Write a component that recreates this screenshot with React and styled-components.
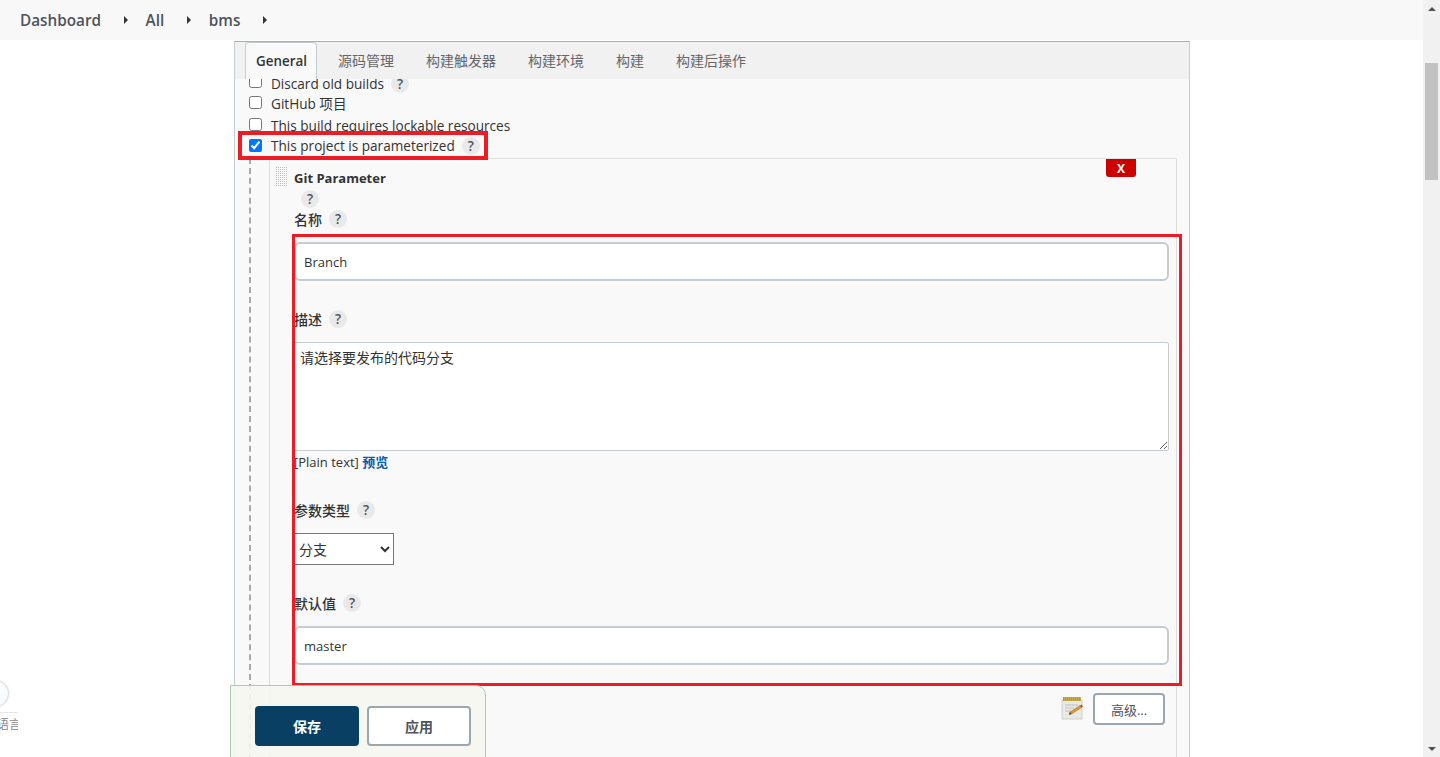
import styled, { createGlobalStyle } from 'styled-components'

const GlobalStyle = createGlobalStyle`
  html, body { margin: 0; padding: 0; height: 100%; overflow: hidden; background: #fff; }
  body { font-family: "Open Sans", "Noto Sans CJK SC", sans-serif; font-size: 13.6px; color: #333; }
`

const tabs = ['源码管理', '构建触发器', '构建环境', '构建', '构建后操作']
const crumbs = ['Dashboard', 'All', 'bms']

const HelpMark = () => <Help>?</Help>

const NoteIcon = () => (
  <svg width="24" height="24" viewBox="0 0 24 24">
    <rect x="1" y="3" width="20" height="19" fill="#e9e9e6" stroke="#cfcfca" />
    <rect x="2" y="0" width="18" height="4" fill="#c8ad4e" />
    <path d="M2 1h18M2 3h18" stroke="#9c8733" strokeDasharray="1 1" />
    <path d="M4 8h13M4 11h9M4 14h6" stroke="#cdcdc8" strokeWidth="1.4" />
    <path d="M8 17.5l1-2.5 10-6.5 1.5 2-10 6.5z" fill="#dc9a2e" stroke="#9b6a1c" strokeWidth=".5" />
    <path d="M19 8.5l1.5 2 1.5-1-1.5-2z" fill="#d9352b" />
    <path d="M8 17.5l1-2.5 1.5 2z" fill="#444" />
  </svg>
)

const App = () => {
  return (
    <Shell>
      <GlobalStyle />
      <Page>
        <Breadcrumb>
          {crumbs.map((c) => (
            <Crumb key={c}>
              {c}
              <CrumbArrow />
            </Crumb>
          ))}
        </Breadcrumb>

        <Panel>
          <TabBar>
            <Tab $active>General</Tab>
            {tabs.map((t) => (
              <Tab key={t}>{t}</Tab>
            ))}
          </TabBar>
          <Body>
            <OptionList>
              <Option $boxUp={4}>
                <input type="checkbox" />
                Discard old builds <HelpMark />
              </Option>
              <Option $shift={-2}>
                <input type="checkbox" />
                GitHub 项目
              </Option>
              <Option $shift={2} $boxUp={2}>
                <input type="checkbox" />
                This build requires lockable resources
              </Option>
              <Option $shift={-1}>
                <input type="checkbox" defaultChecked />
                This project is parameterized <HelpMark />
              </Option>
            </OptionList>

            <Nested>
              <ParamBlock>
                <DragHandle />
                <DeleteButton>X</DeleteButton>
                <ParamTitle>Git Parameter</ParamTitle>
                <TitleHelp>
                  <HelpMark />
                </TitleHelp>

                <Label>
                  名称 <HelpMark />
                </Label>
                <TextField defaultValue="Branch" />

                <Label $top={27}>
                  描述 <HelpMark />
                </Label>
                <TextArea defaultValue="请选择要发布的代码分支" />
                <Format>
                  [Plain text] <a href="#preview">预览</a>
                </Format>

                <Label $top={26}>
                  参数类型 <HelpMark />
                </Label>
                <TypeSelect defaultValue="branch">
                  <option value="branch">分支</option>
                  <option value="tag">标签</option>
                </TypeSelect>

                <Label $top={27}>
                  默认值 <HelpMark />
                </Label>
                <TextField defaultValue="master" />

                <AdvancedRow>
                  <NoteIcon />
                  <AdvancedButton>高级...</AdvancedButton>
                </AdvancedRow>
              </ParamBlock>
            </Nested>
          </Body>
        </Panel>

        <SmallMark />
        <BigMark />

        <SaveBar>
          <SaveButton>保存</SaveButton>
          <ApplyButton>应用</ApplyButton>
        </SaveBar>

        <LangDot />
        <LangTab>
          <span>语言</span>
        </LangTab>
      </Page>
      <Scrollbar>
        <ScrollArrow $up />
        <ScrollTrack>
          <ScrollThumb />
        </ScrollTrack>
        <ScrollArrow />
      </Scrollbar>
    </Shell>
  )
}

export default App

const Shell = styled.div`
  display: flex;
  height: 757px;
  overflow: hidden;
`
const Page = styled.div`
  flex: 1;
  min-width: 0;
  position: relative;
  overflow: hidden;
`
const Breadcrumb = styled.nav`
  height: 40px;
  background: #f8f8f8;
  display: flex;
  align-items: center;
  padding-left: 20px;
`
const Crumb = styled.div`
  display: flex;
  align-items: center;
  font-size: 15.3px;
  font-weight: 600;
  color: #4d545d;
`
const CrumbArrow = styled.i`
  width: 0;
  height: 0;
  margin: 0 17.5px 0 23px;
  border-left: 4px solid #333;
  border-top: 4px solid transparent;
  border-bottom: 4px solid transparent;
`
const Panel = styled.section`
  width: 956px;
  box-sizing: border-box;
  margin: 1px 0 0 234px;
  height: 900px;
  background: #f9f9f9;
  border: 1px solid #c3ccd1;
  border-top-color: #a6afb6;
`
const TabBar = styled.div`
  height: 37px;
  background: #f1f1f1;
  display: flex;
  padding-left: 10px;
  position: relative;
  z-index: 1;
`
const Tab = styled.div`
  box-sizing: border-box;
  height: ${(p) => (p.$active ? '37px' : '36px')};
  line-height: 37px;
  font-size: ${(p) => (p.$active ? '13.4px' : '14px')};
  padding: ${(p) => (p.$active ? '0 9px 0 10px' : '0 16px')};
  margin-right: ${(p) => (p.$active ? '5px' : '0')};
  font-weight: ${(p) => (p.$active ? 600 : 400)};
  color: ${(p) => (p.$active ? '#333' : '#666')};
  background: ${(p) => (p.$active ? '#f9f9f9' : 'transparent')};
  border: ${(p) => (p.$active ? '1px solid #c3ccd1' : 'none')};
  border-bottom: none;
  border-radius: 4px 4px 0 0;
`
const Body = styled.div`
  overflow: hidden;
`
const OptionList = styled.div`
  margin-top: -6px;
  padding-left: 14px;
`
const Option = styled.label`
  display: flex;
  align-items: center;
  height: 21px;
  margin-top: ${(p) => p.$shift || 0}px;
  white-space: nowrap;
  input {
    width: 13px;
    height: 13px;
    margin: ${(p) => -(p.$boxUp || 0)}px 9px 0 0;
  }
`
const Help = styled.span`
  display: inline-block;
  flex: none;
  width: 18px;
  height: 18px;
  line-height: 18px;
  margin-left: 7px;
  border-radius: 50%;
  background: #e9e9e9;
  text-align: center;
  font-size: 13.5px;
  font-weight: 600;
  color: #4d545d;
`
const Nested = styled.div`
  margin: 2px 12px 0 14px;
  padding-left: 18px;
  border-left: 2px dashed #a9a9a9;
`
const ParamBlock = styled.div`
  position: relative;
  border: 1px solid #ddd;
  padding: 9px 7px 0 24px;
  height: 640px;
`
const DragHandle = styled.div`
  position: absolute;
  left: 5px;
  top: 8px;
  width: 12px;
  height: 20px;
  background: conic-gradient(#bbb 25%, transparent 0) 0 0 / 2px 2px;
`
const DeleteButton = styled.button`
  position: absolute;
  top: 0;
  right: 40px;
  width: 30px;
  height: 18px;
  padding: 0;
  border: none;
  border-radius: 0 0 3px 3px;
  background: #cc0000;
  color: #fff;
  font: 700 12px "Open Sans", sans-serif;
`
const ParamTitle = styled.div`
  font-weight: 700;
  font-size: 13px;
  line-height: 20px;
  color: #333;
`
const TitleHelp = styled.div`
  margin-top: 1px;
  height: 19px;
`
const Label = styled.div`
  display: flex;
  align-items: center;
  height: 22px;
  margin-top: ${(p) => p.$top || 0}px;
  font-weight: 500;
  font-size: 14px;
  color: #333;
`
const TextField = styled.input`
  display: block;
  box-sizing: border-box;
  width: 875px;
  height: 39px;
  margin-top: 12px;
  padding: 0 8px;
  border: 2px solid #c3ccd1;
  border-radius: 6px;
  background: #fff;
  font: 13px "Open Sans", sans-serif;
  color: #333;
`
const TextArea = styled.textarea`
  display: block;
  box-sizing: border-box;
  width: 875px;
  height: 109px;
  margin-top: 12px;
  padding: 4px 5px;
  border: 1px solid #c3ccd1;
  border-radius: 2px;
  background: #fff;
  font: 14px "Noto Sans CJK SC", sans-serif;
  color: #333;
`
const Format = styled.div`
  line-height: 22px;
  font-size: 13px;
  a {
    color: #0b5cad;
    font-weight: 700;
    text-decoration: none;
  }
`
const TypeSelect = styled.select`
  display: block;
  width: 100px;
  height: 32px;
  margin-top: 12px;
  border: 1px solid #767676;
  background: #fff;
  font: 14px "Noto Sans CJK SC", sans-serif;
  color: #333;
`
const AdvancedRow = styled.div`
  display: flex;
  justify-content: flex-end;
  align-items: center;
  gap: 8px;
  margin-top: 28px;
  padding-right: 4px;
`
const AdvancedButton = styled.button`
  box-sizing: border-box;
  width: 72px;
  height: 32px;
  padding: 0;
  border: 2px solid #9aa7b0;
  border-radius: 4px;
  background: #fff;
  font: 13px "Open Sans", "Noto Sans CJK SC", sans-serif;
  color: #4d545d;
`
const SmallMark = styled.div`
  position: absolute;
  left: 238px;
  top: 131px;
  width: 250px;
  height: 29px;
  box-sizing: border-box;
  border: 4px solid #ed1c24;
  pointer-events: none;
`
const BigMark = styled.div`
  position: absolute;
  left: 292px;
  top: 234px;
  width: 890px;
  height: 452px;
  box-sizing: border-box;
  border: 3px solid #ed1c24;
  pointer-events: none;
`
const SaveBar = styled.div`
  position: absolute;
  left: 230px;
  top: 685px;
  width: 256px;
  height: 90px;
  box-sizing: border-box;
  display: flex;
  gap: 8px;
  padding: 20px 0 0 24px;
  background: rgba(245, 246, 238, 0.9);
  border: 1px solid #a8cdb5;
  border-radius: 0 10px 0 0;
`
const SaveButton = styled.button`
  box-sizing: border-box;
  width: 104px;
  height: 40px;
  padding: 0;
  border: none;
  border-radius: 4px;
  background: #083f63;
  color: #fff;
  font: 700 14px "Noto Sans CJK SC", sans-serif;
`
const ApplyButton = styled(SaveButton)`
  border: 2px solid #9aa7b0;
  background: #fff;
  color: #4d545d;
`
const LangDot = styled.div`
  position: absolute;
  left: -17px;
  top: 681px;
  width: 25px;
  height: 25px;
  border-radius: 50%;
  background: #f9fbfd;
  box-shadow: 0 0 3px #aaa;
`
const LangTab = styled.div`
  position: absolute;
  left: 0;
  top: 712px;
  width: 18px;
  height: 22px;
  overflow: hidden;
  border-top: 1px solid #e6e6e6;
  font-size: 12px;
  line-height: 23px;
  color: #888;
  white-space: nowrap;
  span {
    margin-left: -3px;
  }
`
const Scrollbar = styled.div`
  width: 17px;
  flex: none;
  display: flex;
  flex-direction: column;
  background: #f1f1f1;
`
const ScrollArrow = styled.div`
  height: 17px;
  flex: none;
  display: flex;
  align-items: center;
  justify-content: center;
  &::before {
    content: '';
    border-left: 4px solid transparent;
    border-right: 4px solid transparent;
    ${(p) => (p.$up ? 'border-bottom: 4px solid #505050;' : 'border-top: 4px solid #505050;')}
  }
`
const ScrollTrack = styled.div`
  flex: 1;
  padding-top: 46px;
`
const ScrollThumb = styled.div`
  height: 117px;
  margin: 0 2px;
  background: #c1c1c1;
`
